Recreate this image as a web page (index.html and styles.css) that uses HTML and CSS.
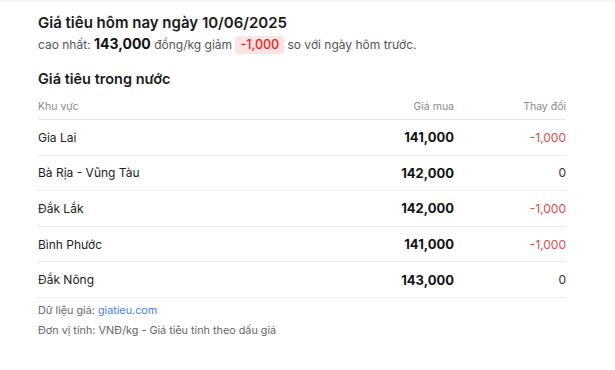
FILE: index.html
```html
<!DOCTYPE html>
<html lang="vi">
<head>
<meta charset="utf-8">
<link rel="stylesheet" href="styles.css">
</head>
<body>
<div class="page">
  <h1 class="title">Giá tiêu hôm nay ngày 10/06/2025</h1>
  <p class="summary">cao nhất: <strong class="top">143,000</strong> đồng/kg giảm <span class="badge">-1,000</span> so với ngày hôm trước.</p>
  <h2 class="section">Giá tiêu trong nước</h2>
  <table class="prices">
    <thead>
      <tr><th class="c-region">Khu vực</th><th class="c-price">Giá mua</th><th class="c-change">Thay đổi</th></tr>
    </thead>
    <tbody>
      <tr><td class="c-region">Gia Lai</td><td class="c-price">141,000</td><td class="c-change down">-1,000</td></tr>
      <tr><td class="c-region">Bà Rịa - Vũng Tàu</td><td class="c-price">142,000</td><td class="c-change">0</td></tr>
      <tr><td class="c-region">Đắk Lắk</td><td class="c-price">142,000</td><td class="c-change down">-1,000</td></tr>
      <tr><td class="c-region">Bình Phước</td><td class="c-price">141,000</td><td class="c-change down">-1,000</td></tr>
      <tr><td class="c-region">Đắk Nông</td><td class="c-price">143,000</td><td class="c-change">0</td></tr>
    </tbody>
  </table>
  <p class="note">Dữ liệu giá: <a class="link" href="#">giatieu.com</a></p>
  <p class="note">Đơn vị tính: VNĐ/kg - Giá tiêu tính theo dấu giá</p>
</div>
</body>
</html>
```
FILE: styles.css
```css
html, body { margin: 0; padding: 0; background: #fff; }
body {
  font-family: Inter, "Noto Sans", "Liberation Sans", sans-serif;
  color: #1a1a1a;
  border-top: 2px solid #f5f5f5;
}
.page {
  width: 528px;
  margin-left: 38px;
  padding-top: 11px;
}
.title {
  margin: 0;
  font-size: 15px;
  line-height: 20px;
  font-weight: 600;
  color: #1a1a1a;
}
.summary {
  margin: 1px 0 0;
  font-size: 12px;
  line-height: 20px;
  color: #555;
}
.top {
  font-size: 14px;
  font-weight: 700;
  color: #111;
}
.badge {
  display: inline-block;
  background: #fde4e4;
  color: #ee1c1c;
  font-size: 12.5px;
  font-weight: 500;
  padding: 0 5px;
  line-height: 18px;
  border-radius: 3px;
}
.section {
  margin: 14px 0 0;
  font-size: 14.5px;
  line-height: 20px;
  font-weight: 600;
  color: #1a1a1a;
}
.prices {
  width: 100%;
  border-collapse: collapse;
  margin-top: 5px;
}
.prices th {
  font-size: 10.5px;
  font-weight: 400;
  color: #8a8a8a;
  height: 25px;
  padding: 0;
  border-bottom: 1px solid #e8e8e8;
  vertical-align: middle;
}
.prices td {
  font-size: 12px;
  height: 34.6px;
  padding: 0;
  border-bottom: 1px solid #ececec;
  color: #222;
}
.c-region { text-align: left; }
.c-price { text-align: right; width: 200px; }
.c-change { text-align: right; width: 112px; }
.prices td.c-price { font-weight: 700; font-size: 13px; color: #111; }
.prices td.c-change { font-size: 12px; color: #333; }
.prices td.down { color: #e34a4a; }
.note {
  margin: 0;
  font-size: 10.8px;
  line-height: 20px;
  color: #666;
}
.prices + .note { margin-top: 3px; }
.link { color: #4a7fe0; text-decoration: none; }
```
